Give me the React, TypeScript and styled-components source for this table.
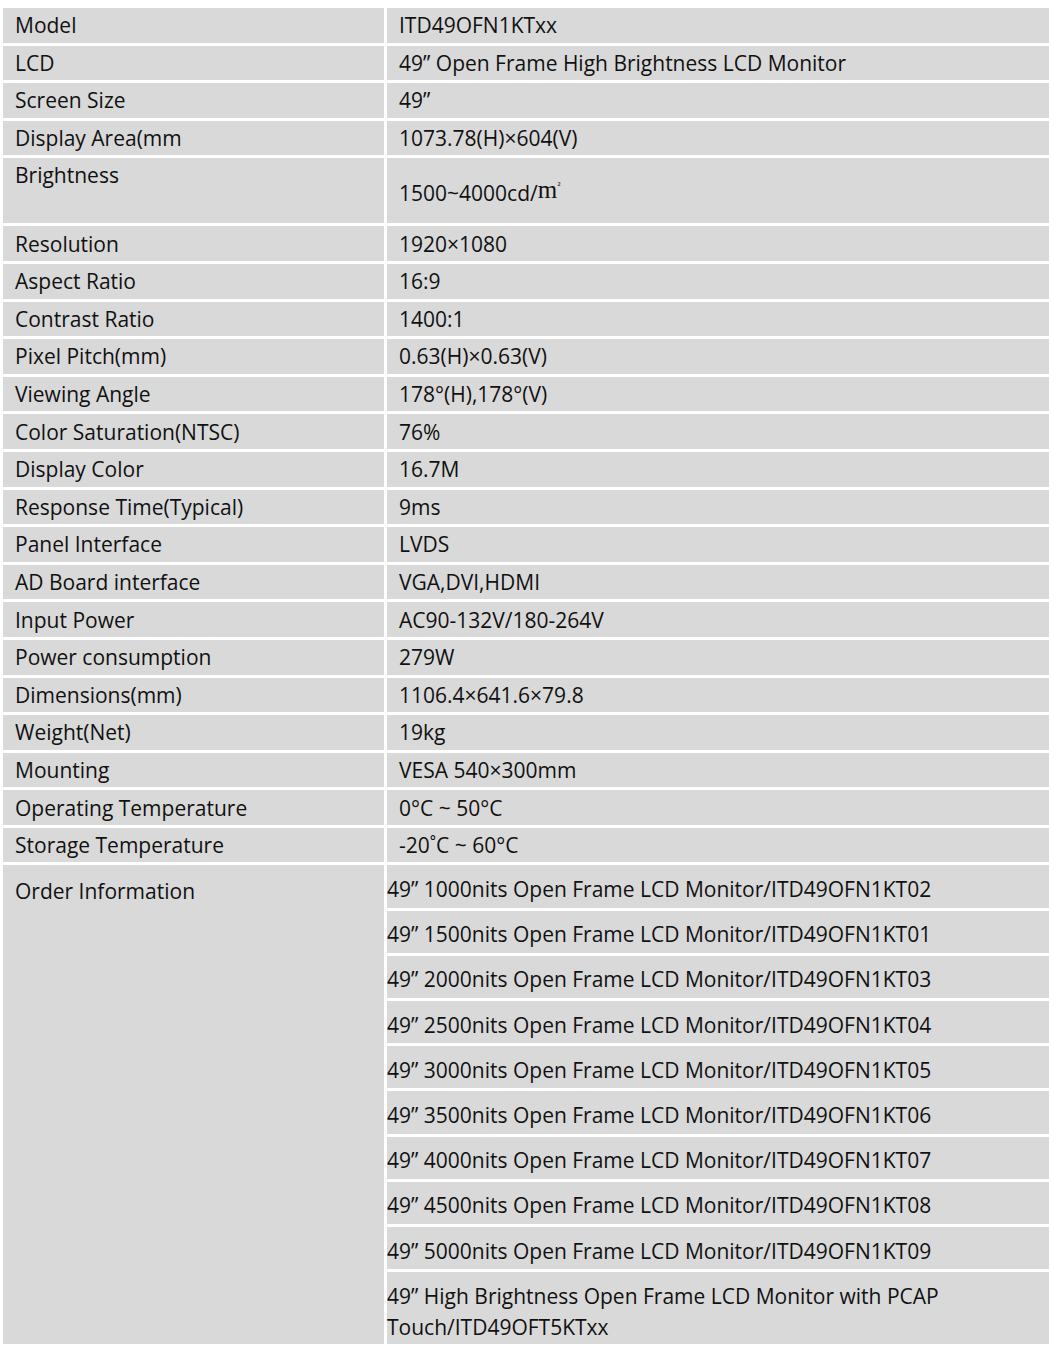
import styled, { createGlobalStyle } from 'styled-components';

const GlobalStyle = createGlobalStyle`
  html, body {
    margin: 0;
    padding: 0;
    background: #ffffff;
    overflow: hidden;
  }
  body {
    font-family: 'Open Sans', 'Liberation Sans', sans-serif;
    color: #111111;
  }
`;

const Page = styled.div`
  width: 1049px;
  padding-top: 5px;
  overflow: hidden;
`;

const Table = styled.table`
  width: 1052px;
  border-collapse: separate;
  border-spacing: 3px;
  table-layout: fixed;
  font-size: 21px;
`;

const Row = styled.tr<{ $height?: number }>`
  height: ${({ $height }) => $height ?? 34.6}px;
`;

const LabelCell = styled.td`
  background: #d9d9d9;
  padding: 0 12px;
  line-height: 26px;
  vertical-align: middle;
  white-space: nowrap;
  box-sizing: border-box;
`;

const TopLabelCell = styled(LabelCell)`
  vertical-align: top;
  padding-top: 4px;
`;

const ValueCell = styled.td`
  background: #d9d9d9;
  padding: 0 12px;
  line-height: 26px;
  vertical-align: middle;
  white-space: nowrap;
  box-sizing: border-box;
`;

const BrightnessCell = styled(ValueCell)`
  padding-top: 4px;
`;

const OrderLabelCell = styled(LabelCell)`
  vertical-align: top;
  padding-top: 13px;
`;

const OrderCell = styled.td<{ $last?: boolean }>`
  background: #d9d9d9;
  padding: ${({ $last }) => ($last ? '9px 0 1px' : '6px 0 0')};
  line-height: 31px;
  vertical-align: middle;
  box-sizing: border-box;
`;

const Unit = styled.span`
  font-family: 'Liberation Serif', 'DejaVu Serif', serif;
  font-size: 25px;
  position: relative;
  top: -3px;
`;

const Sup = styled.sup`
  font-size: 11px;
  vertical-align: top;
  position: relative;
  top: -5px;
`;

const specs: [string, string][] = [
  ['Resolution', '1920×1080'],
  ['Aspect Ratio', '16:9'],
  ['Contrast Ratio', '1400:1'],
  ['Pixel Pitch(mm)', '0.63(H)×0.63(V)'],
  ['Viewing Angle', '178°(H),178°(V)'],
  ['Color Saturation(NTSC)', '76%'],
  ['Display Color', '16.7M'],
  ['Response Time(Typical)', '9ms'],
  ['Panel Interface', 'LVDS'],
  ['AD Board interface', 'VGA,DVI,HDMI'],
  ['Input Power', 'AC90-132V/180-264V'],
  ['Power consumption', '279W'],
  ['Dimensions(mm)', '1106.4×641.6×79.8'],
  ['Weight(Net)', '19kg'],
  ['Mounting', 'VESA 540×300mm'],
  ['Operating Temperature', '0°C ~ 50°C'],
  ['Storage Temperature', '-20˚C ~ 60°C'],
];

const orders = [
  '1000nits Open Frame LCD Monitor/ITD49OFN1KT02',
  '1500nits Open Frame LCD Monitor/ITD49OFN1KT01',
  '2000nits Open Frame LCD Monitor/ITD49OFN1KT03',
  '2500nits Open Frame LCD Monitor/ITD49OFN1KT04',
  '3000nits Open Frame LCD Monitor/ITD49OFN1KT05',
  '3500nits Open Frame LCD Monitor/ITD49OFN1KT06',
  '4000nits Open Frame LCD Monitor/ITD49OFN1KT07',
  '4500nits Open Frame LCD Monitor/ITD49OFN1KT08',
  '5000nits Open Frame LCD Monitor/ITD49OFN1KT09',
];

export default function App() {
  return (
    <Page>
      <GlobalStyle />
      <Table>
        <colgroup>
          <col style={{ width: 381 }} />
          <col />
        </colgroup>
        <tbody>
          <Row>
            <LabelCell>Model</LabelCell>
            <ValueCell>ITD49OFN1KTxx</ValueCell>
          </Row>
          <Row>
            <LabelCell>LCD</LabelCell>
            <ValueCell>49” Open Frame High Brightness LCD Monitor</ValueCell>
          </Row>
          <Row>
            <LabelCell>Screen Size</LabelCell>
            <ValueCell>49”</ValueCell>
          </Row>
          <Row>
            <LabelCell>Display Area(mm</LabelCell>
            <ValueCell>1073.78(H)×604(V)</ValueCell>
          </Row>
          <Row $height={65}>
            <TopLabelCell>Brightness</TopLabelCell>
            <BrightnessCell>
              1500~4000cd/<Unit>m<Sup>²</Sup></Unit>
            </BrightnessCell>
          </Row>
          {specs.map(([label, value]) => (
            <Row key={label}>
              <LabelCell>{label}</LabelCell>
              <ValueCell>{value}</ValueCell>
            </Row>
          ))}
          {orders.map((item, i) => (
            <Row key={item} $height={42.2}>
              {i === 0 && <OrderLabelCell rowSpan={10}>Order Information</OrderLabelCell>}
              <OrderCell>49” {item}</OrderCell>
            </Row>
          ))}
          <Row $height={66}>
            <OrderCell $last>
              49” High Brightness Open Frame LCD Monitor with PCAP
              <br />
              Touch/ITD49OFT5KTxx
            </OrderCell>
          </Row>
        </tbody>
      </Table>
    </Page>
  );
}
